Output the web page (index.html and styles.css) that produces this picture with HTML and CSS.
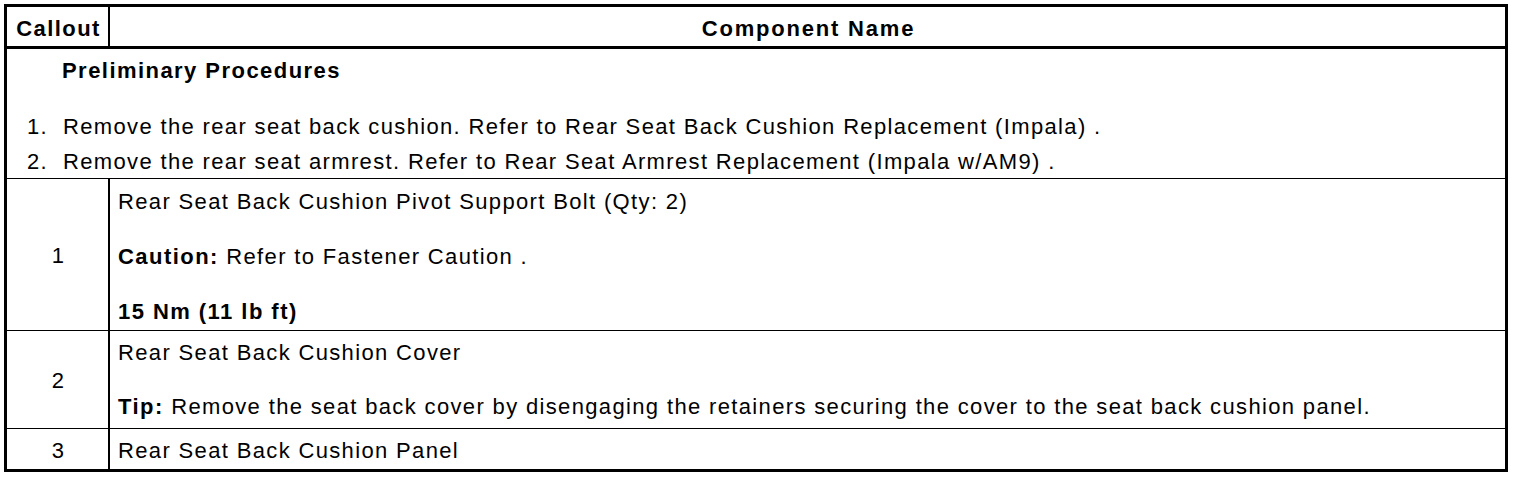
FILE: index.html
```html
<!DOCTYPE html>
<html>
<head>
<meta charset="utf-8">
<link rel="stylesheet" href="styles.css">
</head>
<body>
<div class="table">
  <div class="row head">
    <div class="c1">Callout</div>
    <div class="c2">Component Name</div>
  </div>
  <div class="row prelim">
    <div class="prelim-title">Preliminary Procedures</div>
    <ol class="steps">
      <li><span class="num">1.</span><span>Remove the rear seat back cushion. Refer to Rear Seat Back Cushion Replacement (Impala) .</span></li>
      <li><span class="num">2.</span><span>Remove the rear seat armrest. Refer to Rear Seat Armrest Replacement (Impala w/AM9) .</span></li>
    </ol>
  </div>
  <div class="row item">
    <div class="c1">1</div>
    <div class="c2">
      <p>Rear Seat Back Cushion Pivot Support Bolt (Qty: 2)</p>
      <p><b>Caution:</b> Refer to Fastener Caution .</p>
      <p><b>15 Nm (11 lb ft)</b></p>
    </div>
  </div>
  <div class="row item tip">
    <div class="c1">2</div>
    <div class="c2">
      <p>Rear Seat Back Cushion Cover</p>
      <p><b>Tip:</b> Remove the seat back cover by disengaging the retainers securing the cover to the seat back cushion panel.</p>
    </div>
  </div>
  <div class="row item last">
    <div class="c1">3</div>
    <div class="c2">
      <p>Rear Seat Back Cushion Panel</p>
    </div>
  </div>
</div>
</body>
</html>
```

FILE: styles.css
```css
html, body {
  margin: 0;
  padding: 0;
  background: #fff;
}
body {
  padding: 4px;
  font-family: "Liberation Sans", Arial, sans-serif;
  font-size: 22px;
  letter-spacing: 1.35px;
  color: #000;
  line-height: 23px;
}
b, .head, .prelim-title {
  letter-spacing: 1.45px;
}
.table {
  width: 1498px;
  border: 3px solid #000;
}
.row {
  display: grid;
  grid-template-columns: 103px 1fr;
  border-bottom: 1px solid #000;
}
.row.last {
  border-bottom: none;
}
.row.head {
  height: 39px;
  border-bottom: 3px solid #000;
  font-weight: bold;
}
.head .c1, .head .c2 {
  display: flex;
  align-items: center;
  justify-content: center;
  box-sizing: border-box;
  padding: 4px 0 0 2px;
}
.head .c2 {
  letter-spacing: 1.8px;
}
.c1 {
  border-right: 2px solid #000;
}
.item .c1 {
  display: flex;
  align-items: center;
  justify-content: center;
  padding: 2px 0 0 2px;
}
.item .c2 {
  padding: 11px 8px 7px 8px;
}
.item p {
  margin: 0 0 32px 0;
}
.item p:last-child {
  margin-bottom: 0;
}
.item.tip .c2 {
  padding: 10px 8px 10px 8px;
}
.item.tip p {
  margin-bottom: 31px;
}
.item.tip p:last-child {
  margin-bottom: 0;
}
.item.last .c2 {
  padding: 10px 8px 7px 8px;
}
.prelim {
  display: block;
  padding: 10px 0 5px 0;
}
.prelim-title {
  font-weight: bold;
  padding-left: 55px;
  margin-bottom: 33px;
}
.steps {
  list-style: none;
  margin: 0;
  padding: 0;
}
.steps li {
  display: flex;
  margin-bottom: 12px;
}
.steps li:last-child {
  margin-bottom: 0;
}
.num {
  width: 36px;
  padding-left: 20px;
  flex: none;
}
```
